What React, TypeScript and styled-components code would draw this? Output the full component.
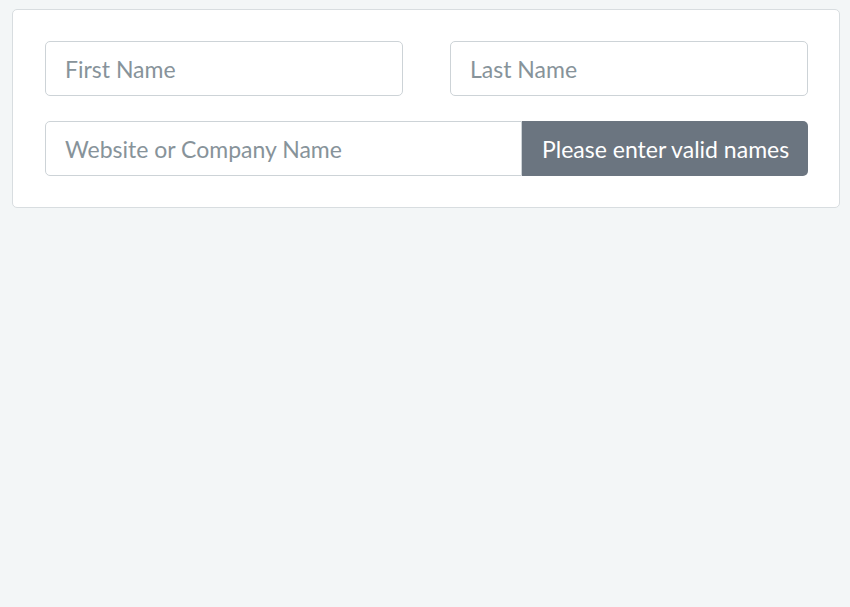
import React from 'react';
import { styled, createGlobalStyle } from 'styled-components';

const GlobalStyle = createGlobalStyle`
  html, body {
    margin: 0;
    padding: 0;
    background: #f3f6f7;
    font-family: Lato, "Open Sans", sans-serif;
  }
`;

const Page = styled.div`
  padding: 9px 10px 0 12px;
  min-height: 607px;
  box-sizing: border-box;
`;

const FormCard = styled.form`
  background: #ffffff;
  border: 1px solid #d8dde0;
  border-radius: 5px;
  padding: 31px 31px 31px 32px;
  display: flex;
  flex-direction: column;
  gap: 25px;
`;

const NameRow = styled.div`
  display: grid;
  grid-template-columns: 1fr 1fr;
  column-gap: 47px;
`;

const TextInput = styled.input<{ $joined?: boolean }>`
  box-sizing: border-box;
  height: 55px;
  width: 100%;
  min-width: 0;
  padding: 0 19px;
  font-family: Lato, sans-serif;
  font-size: 23px;
  color: #4d5960;
  background: #ffffff;
  border: 1px solid #cdd3d7;
  border-radius: ${({ $joined }) => ($joined ? '5px 0 0 5px' : '5px')};
  outline: none;

  &::placeholder {
    color: #87939a;
  }
`;

const InputGroup = styled.div`
  display: flex;
`;

const SubmitButton = styled.button`
  flex: 0 0 auto;
  width: 286px;
  height: 55px;
  padding: 0 20px;
  font-family: Lato, sans-serif;
  font-size: 23px;
  color: #ffffff;
  background: #6b7580;
  border: none;
  border-radius: 0 5px 5px 0;
  cursor: not-allowed;
  white-space: nowrap;
`;

const App: React.FC = () => {
  return (
    <Page>
      <GlobalStyle />
      <FormCard onSubmit={(e) => e.preventDefault()}>
        <NameRow>
          <TextInput placeholder="First Name" />
          <TextInput placeholder="Last Name" />
        </NameRow>
        <InputGroup>
          <TextInput $joined placeholder="Website or Company Name" />
          <SubmitButton type="submit">Please enter valid names</SubmitButton>
        </InputGroup>
      </FormCard>
    </Page>
  );
};

export default App;
